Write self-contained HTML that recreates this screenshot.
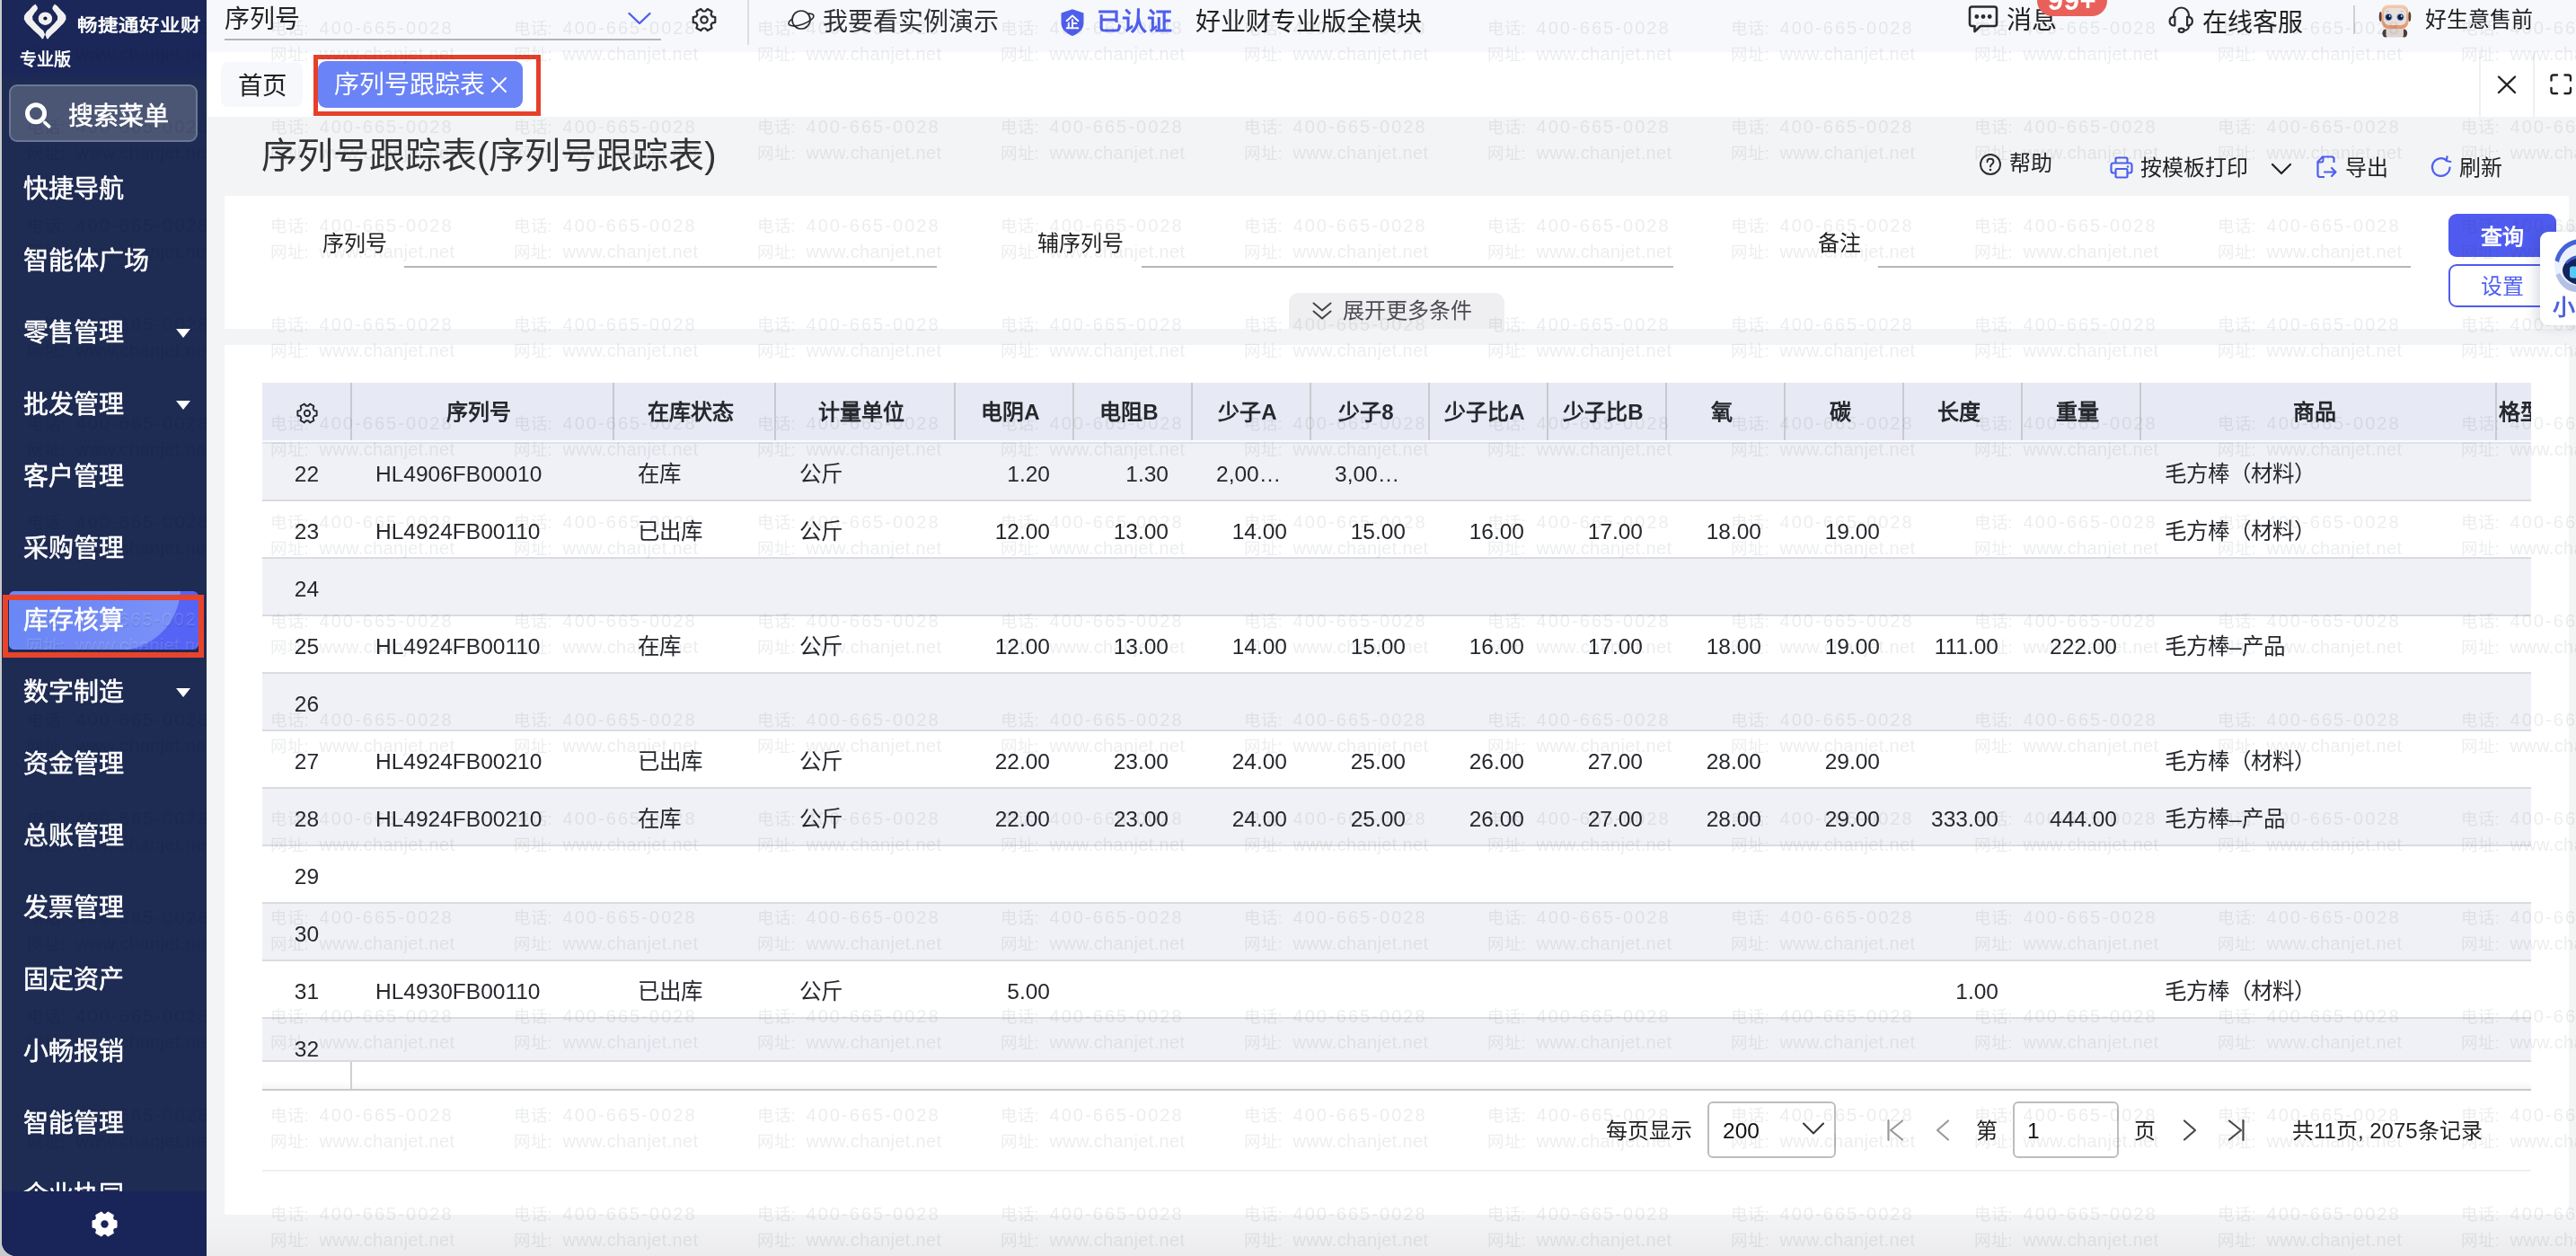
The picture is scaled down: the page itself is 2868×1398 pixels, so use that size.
<!DOCTYPE html>
<html lang="zh-CN"><head><meta charset="utf-8"><title>序列号跟踪表</title>
<style>
*{box-sizing:border-box;margin:0;padding:0}
html,body{width:2868px;height:1398px;overflow:hidden}
html{background:#f3f4f6}
#wrap{position:absolute;left:0;top:0;width:2868px;height:1398px;overflow:hidden;will-change:transform;transform:translateZ(0)}
body{position:relative;background:transparent;font-family:"Liberation Sans",sans-serif;color:#222;-webkit-font-smoothing:antialiased}
.abs,.mi,.tri,.wm,.tbl,.row,.c,.h,.vd,.thead,.tfoot,.hgear,svg.ic,.t{position:absolute}
.t{white-space:nowrap;line-height:1}
/* sidebar */
#strip{left:0;top:0;width:24px;height:1398px;background:#c8cacb}
#side{left:2px;top:0;width:228px;height:1398px;background:#1e2b53;border-bottom-left-radius:16px;overflow:hidden;z-index:55}
#side .wm{color:rgba(4,8,30,.075);z-index:0}
#sidetop{left:0;top:0;width:228px;height:90px;background:linear-gradient(180deg,#1b2758 0,#1b2758 92%,#1e2b53 100%)}
#sidebot{left:0;top:1326px;width:228px;height:72px;background:#192558}
.mi{left:23.8px;height:48px;line-height:48px;font-size:28px;color:#fff;font-weight:400;-webkit-text-stroke:.55px #fff;white-space:nowrap;letter-spacing:0}
.tri{left:194px;width:0;height:0;border-left:8px solid transparent;border-right:8px solid transparent;border-top:10px solid #fff}
#search{left:8px;top:94px;width:210px;height:64px;border-radius:9px;background:#4b5574;border:2px solid #6c7796}
#active{left:7.5px;top:658px;width:211px;height:64.5px;border-radius:6px;background:#5564f5;overflow:hidden}
#active:before{content:"";position:absolute;left:-20px;top:-74px;width:211px;height:140px;border-radius:0 70px 70px 0;background:linear-gradient(90deg,#6888f5 0%,#7088f6 45%,#7a92f8 100%)}
#active .wm{color:rgba(255,255,255,.13);left:19.5px;top:16.5px}
#redside{left:3px;top:661.5px;width:224px;height:70.5px;border:6px solid #e9432a;z-index:56}
/* top */
#topbar{left:230px;top:0;width:2638px;height:58px;background:#f7f8fc}
#tabbar{left:230px;top:58px;width:2638px;height:72px;background:#fff}
#panel1{left:250px;top:218px;width:2610px;height:148px;background:#fff}
#panel2{left:250px;top:384px;width:2610px;height:968px;background:#fff}
.ul{height:2px;background:#b5b5b8}
/* table */
.tbl{overflow:hidden;font-size:24px}
.thead{left:0;top:0;width:100%;height:64px;background:#e7e9f4;border-bottom:0}
.thead:after{content:"";position:absolute;left:0;top:64px;width:100%;height:4px;background:linear-gradient(180deg,#fbfbfd 0,#fbfbfd 60%,#e1e2e7 61%,#e1e2e7 100%)}
.h{top:0;height:64px;line-height:66px;text-align:center;font-weight:700;font-size:24px;color:#26282e;white-space:nowrap;overflow:hidden;padding-right:8px}
.vd{top:0;width:2px;height:64px;background:#c9cad0}
.row{left:0;width:100%;height:64px;border-bottom:2px solid #dadbe0;background:#fff}
.row.alt{background:#f0f1f7}
.c{top:0;height:62px;line-height:68px;white-space:nowrap;overflow:hidden;color:#26282e;font-size:24.5px}
.c.l{padding-left:27px;text-align:left}
.c.r{padding-right:26px;text-align:right}
.c.m{text-align:center}
.tfoot{left:0;width:100%;height:34px;background:#fff;border-top:2px solid #d9dade;border-bottom:2px solid #c9c9cd;box-shadow:inset 0 -8px 8px -6px rgba(0,0,0,.06)}
.tfoot:after{content:"";position:absolute;left:98px;top:0;width:2px;height:30px;background:#d0d0d4}
/* watermark */
.wm{font-size:20px;line-height:29px;color:rgba(35,45,50,.088);white-space:nowrap;z-index:50;pointer-events:none}
.wm i{font-style:normal;display:inline-block;width:55px;font-size:18.5px}
.wm b{font-weight:400;letter-spacing:2.05px}
.wm u{text-decoration:none;letter-spacing:.35px}
</style></head><body><div id="wrap">
<div class="abs" id="topbar"></div><div class="abs" id="tabbar"></div>
<div class="abs" id="panel1"></div><div class="abs" id="panel2"></div>
<!-- ===== top bar ===== -->
<div class="t" style="left:250px;top:7.5px;font-size:28px;color:#222">序列号</div>
<div class="abs ul" style="left:250px;top:43px;width:486px"></div>
<svg class="ic" style="left:698px;top:12px" width="28" height="17" viewBox="0 0 28 17"><path d="M2.5 3L14 14 25.5 3" fill="none" stroke="#4e5fee" stroke-width="2.4" stroke-linecap="round" stroke-linejoin="round"/></svg>
<svg class="ic" style="left:769px;top:7px;color:#2b2b2f" width="30" height="30" viewBox="-15 -15 30 30"><path d="M8.90 -3.60 L12.28 -2.83 L12.28 2.83 L8.90 3.60 L7.56 5.91 L8.59 9.22 L3.68 12.05 L1.34 9.51 L-1.34 9.51 L-3.68 12.05 L-8.59 9.22 L-7.56 5.91 L-8.90 3.60 L-12.28 2.83 L-12.28 -2.83 L-8.90 -3.60 L-7.56 -5.91 L-8.59 -9.22 L-3.68 -12.05 L-1.34 -9.51 L1.34 -9.51 L3.68 -12.05 L8.59 -9.22 L7.56 -5.91Z" fill="none" stroke="currentColor" stroke-width="2.2" stroke-linejoin="round"/><circle cx="0" cy="0" r="3.7" fill="none" stroke="currentColor" stroke-width="2.2"/></svg>
<div class="abs" style="left:832px;top:0;width:2px;height:50px;background:#dcdde2"></div>
<svg class="ic" style="left:874px;top:5px" width="36" height="34" viewBox="-18 -17 36 34"><circle cx="0" cy="0" r="10" fill="none" stroke="#2b2b2f" stroke-width="1.7"/><path d="M9.19 -4.04A14.6 5.2 0 1 1 -9.19 -4.04" transform="rotate(-19)" fill="none" stroke="#2b2b2f" stroke-width="1.6" stroke-linecap="round"/></svg>
<div class="t" style="left:916px;top:10.5px;font-size:28px;color:#303033">我要看实例演示</div>
<svg class="ic" style="left:1179px;top:9px" width="30" height="32" viewBox="0 0 30 32"><path d="M15 1.200L27.500 5.600V16.500C27.500 23.500 22 28.400 15 31 8 28.400 2.500 23.500 2.500 16.500V5.600Z" fill="#4e5fee"/><path d="M15 8.500L8.600 14.200M15 8.500L21.400 14.200M15 13V22M15 17H19.500M10.800 16.500V22M8.800 22.200H21.200" fill="none" stroke="#fff" stroke-width="2" stroke-linecap="round"/></svg>
<div class="t" style="left:1221px;top:10.5px;font-size:28px;font-weight:700;color:#4e5fee">已认证</div>
<div class="t" style="left:1331px;top:10.5px;font-size:28px;color:#222">好业财专业版全模块</div>
<!-- message -->
<svg class="ic" style="left:2190px;top:4px" width="36" height="35" viewBox="0 0 36 35"><path d="M5.500 3.500H30.500Q33 3.500 33 6V22.500Q33 25 30.500 25H15L8.500 31V25H5.500Q3 25 3 22.500V6Q3 3.500 5.500 3.500Z" fill="none" stroke="#2b2b2f" stroke-width="2.600" stroke-linejoin="round"/><circle cx="10.800" cy="14.500" r="2.400" fill="#2b2b2f"/><circle cx="18" cy="14.500" r="2.400" fill="#2b2b2f"/><circle cx="25.200" cy="14.500" r="2.400" fill="#2b2b2f"/></svg>
<div class="t" style="left:2234px;top:8.5px;font-size:28px;color:#222">消息</div>
<div class="abs" style="left:2268px;top:-19px;width:78px;height:37px;border-radius:17px;background:#e9605b;color:#fff;font-weight:700;font-size:31px;line-height:39.5px;text-align:center;letter-spacing:.6px;overflow:hidden">99+</div>
<!-- headset -->
<svg class="ic" style="left:2412px;top:5px" width="33" height="35" viewBox="0 0 33 35"><g fill="none" stroke="#2b2b2f" stroke-width="2.200" stroke-linejoin="round" stroke-linecap="round"><path d="M8 14V12A8.500 8.500 0 0 1 25 12V14"/><path d="M9.400 13.800H7.400A4.400 4.800 0 0 0 7.400 23.300H9.400Z"/><path d="M23.100 13.800H25.100A4.400 4.800 0 0 1 25.100 23.300H23.100Z"/><path d="M25.200 23.500C25.200 27 22.500 28.800 19.800 28.800"/><ellipse cx="16.700" cy="28.800" rx="3" ry="2.200"/></g></svg>
<div class="t" style="left:2452px;top:11.5px;font-size:28px;color:#222">在线客服</div>
<div class="abs" style="left:2620px;top:6px;width:2px;height:32px;background:#cfd0d6"></div>
<!-- avatar robot -->
<svg class="ic" style="left:2648px;top:4px" width="38" height="38" viewBox="0 0 38 38"><defs><linearGradient id="hg" x1="0" y1="0" x2="0" y2="1"><stop offset="0" stop-color="#f2cdb0"/><stop offset="1" stop-color="#e2956c"/></linearGradient></defs><ellipse cx="2.400" cy="14.500" rx="1.700" ry="5.600" fill="#5a4038"/><ellipse cx="34.600" cy="14.500" rx="1.700" ry="5.600" fill="#5a4038"/><ellipse cx="8" cy="33" rx="3.600" ry="4.600" fill="#4e3b36"/><ellipse cx="28.600" cy="33" rx="3.600" ry="4.600" fill="#4e3b36"/><rect x="8.500" y="26" width="19.500" height="11.500" rx="3" fill="#dbd4d2"/><rect x="3.500" y="1.600" width="30" height="26.400" rx="7.500" fill="url(#hg)"/><rect x="6" y="5" width="25" height="19" rx="6" fill="#e8e0dc"/><circle cx="11.400" cy="15.100" r="4.200" fill="#7d9fd4"/><circle cx="11.400" cy="15.100" r="3.100" fill="#0e1c3f"/><circle cx="12.600" cy="13.900" r=".9" fill="#fff"/><circle cx="24.500" cy="15.100" r="4.200" fill="#7d9fd4"/><circle cx="24.500" cy="15.100" r="3.100" fill="#0e1c3f"/><circle cx="25.700" cy="13.900" r=".9" fill="#fff"/><path d="M16.500 24.200H19.700L18.100 26Z" fill="#d88450"/><path d="M8.500 9.200Q9.800 7.800 11.200 8.300M27.500 9.200Q26.200 7.800 24.800 8.300" fill="none" stroke="#b9b0ac" stroke-width=".8" stroke-linecap="round"/></svg>
<div class="t" style="left:2700px;top:9.5px;font-size:24px;color:#222">好生意售前</div>

<!-- ===== tab bar ===== -->
<div class="abs" style="left:246px;top:69px;width:91px;height:50px;border-radius:8px;background:#f6f8fc"></div>
<div class="t" style="left:265px;top:81.5px;font-size:27.5px;color:#222">首页</div>
<div class="abs" style="left:354px;top:68px;width:228px;height:52px;border-radius:9px;background:#6a83f6"></div>
<div class="t" style="left:372px;top:81px;font-size:28px;color:#fff">序列号跟踪表</div>
<svg class="ic" style="left:546px;top:85px" width="19" height="19" viewBox="0 0 19 19"><path d="M2 2L17 17M17 2L2 17" stroke="#fff" stroke-width="2" stroke-linecap="round"/></svg>
<div class="abs" style="left:349px;top:61px;width:253px;height:68px;border:5px solid #e6402a"></div>
<div class="abs" style="left:2760px;top:58px;width:2px;height:72px;background:#f0f0f2"></div>
<div class="abs" style="left:2820px;top:58px;width:2px;height:72px;background:#f0f0f2"></div>
<svg class="ic" style="left:2779px;top:82px" width="24" height="24" viewBox="0 0 24 24"><path d="M3 3.500L21 21M21 3.500L3 21" stroke="#222" stroke-width="2.400" stroke-linecap="round"/></svg>
<svg class="ic" style="left:2838px;top:81px" width="30" height="26" viewBox="0 0 30 26"><path d="M2.500 8.500V5Q2.500 2.500 5 2.500H9M17.500 2.500H21.500Q24 2.500 24 5V8.500M24 17V20.500Q24 23 21.500 23H17.500M9 23H5Q2.500 23 2.500 20.500V17" fill="none" stroke="#222" stroke-width="2.400" stroke-linecap="round"/></svg>

<!-- ===== title row ===== -->
<div class="t" style="left:291px;top:153px;font-size:40px;color:#333">序列号跟踪表(序列号跟踪表)</div>
<svg class="ic" style="left:2203px;top:170px" width="26" height="26" viewBox="0 0 26 26"><circle cx="13" cy="13" r="11" fill="none" stroke="#2b2b2f" stroke-width="1.900"/><path d="M9.500 10.200C9.500 8 11 6.800 13 6.800S16.500 8 16.500 10C16.500 12.500 13 12.500 13 15.500" fill="none" stroke="#2b2b2f" stroke-width="1.900" stroke-linecap="round"/><circle cx="13" cy="19" r="1.300" fill="#2b2b2f"/></svg>
<div class="t" style="left:2237px;top:170px;font-size:24px;color:#222">帮助</div>
<svg class="ic" style="left:2349px;top:174px" width="26" height="25" viewBox="0 0 26 25"><path d="M6.500 7.500V3Q6.500 1.500 8 1.500H18Q19.500 1.500 19.500 3V7.500" fill="none" stroke="#4e5fee" stroke-width="2.200"/><path d="M6.500 18.500H4Q1.500 18.500 1.500 16V10Q1.500 7.500 4 7.500H22Q24.500 7.500 24.500 10V16Q24.500 18.500 22 18.500H19.500" fill="none" stroke="#4e5fee" stroke-width="2.200"/><rect x="6.500" y="14" width="13" height="9.500" rx="1" fill="none" stroke="#4e5fee" stroke-width="2.200"/><circle cx="20" cy="11.500" r="1.300" fill="#4e5fee"/></svg>
<div class="t" style="left:2383px;top:175px;font-size:24px;color:#222">按模板打印</div>
<svg class="ic" style="left:2528px;top:181px" width="24" height="14" viewBox="0 0 24 14"><path d="M2 2L12 12 22 2" fill="none" stroke="#222" stroke-width="2.200" stroke-linecap="round" stroke-linejoin="round"/></svg>
<svg class="ic" style="left:2579px;top:173px" width="24" height="26" viewBox="0 0 24 26"><path d="M19.500 8V4Q19.500 1.500 17 1.500H7L1.500 7V21.500Q1.500 24 4 24H9" fill="none" stroke="#4e5fee" stroke-width="2.200" stroke-linejoin="round"/><path d="M7.500 1.800V5.500Q7.500 7.500 5.500 7.500H1.800" fill="none" stroke="#4e5fee" stroke-width="2"/><path d="M9 18.500H21.500M17 14L21.500 18.500 17 23" fill="none" stroke="#4e5fee" stroke-width="2.200" stroke-linecap="round" stroke-linejoin="round"/></svg>
<div class="t" style="left:2611px;top:175px;font-size:24px;color:#222">导出</div>
<svg class="ic" style="left:2705px;top:173px" width="26" height="26" viewBox="0 0 26 26"><path d="M22.500 13.500A9.800 9.800 0 1 1 18.300 5" fill="none" stroke="#4e5fee" stroke-width="2.200" stroke-linecap="round"/><path d="M18.600 1.200V6H23.400" fill="none" stroke="#4e5fee" stroke-width="2.200" stroke-linecap="round" stroke-linejoin="round" transform="rotate(12 18.600 6)"/></svg>
<div class="t" style="left:2738px;top:175px;font-size:24px;color:#222">刷新</div>

<!-- ===== filter panel ===== -->
<div class="t" style="left:359px;top:258.5px;font-size:24px;color:#222">序列号</div>
<div class="abs ul" style="left:450px;top:296px;width:593px"></div>
<div class="t" style="left:1155px;top:258.5px;font-size:24px;color:#222">辅序列号</div>
<div class="abs ul" style="left:1271px;top:296px;width:592px"></div>
<div class="t" style="left:2024px;top:258.5px;font-size:24px;color:#222">备注</div>
<div class="abs ul" style="left:2091px;top:296px;width:593px"></div>
<div class="abs" style="left:2726px;top:238px;width:120px;height:48px;border-radius:9px;background:#4f5bef"></div>
<div class="t" style="left:2762px;top:251.5px;font-size:24px;font-weight:700;color:#fff">查询</div>
<div class="abs" style="left:2726px;top:294px;width:120px;height:48px;border-radius:9px;border:2px solid #4f5bef;background:#fff"></div>
<div class="t" style="left:2762px;top:307px;font-size:24px;font-weight:500;color:#4e5fee">设置</div>
<div class="abs" style="left:1435px;top:326px;width:240px;height:40px;border-radius:11px 11px 0 0;background:#efeff2"></div>
<svg class="ic" style="left:1460px;top:335px" width="24" height="22" viewBox="0 0 24 22"><path d="M2.500 2.500L12 10.500 21.500 2.500M2.500 11.500L12 19.500 21.500 11.500" fill="none" stroke="#444" stroke-width="2" stroke-linecap="round" stroke-linejoin="round"/></svg>
<div class="t" style="left:1495px;top:334px;font-size:24px;color:#4c4c50">展开更多条件</div>

<!-- ===== pagination ===== -->
<div class="t" style="left:1788px;top:1246.5px;font-size:24px;color:#222">每页显示</div>
<div class="abs" style="left:1901px;top:1226px;width:143px;height:63px;border-radius:6px;border:2px solid #bdbdc0;background:#fff"></div>
<div class="t" style="left:1918px;top:1246.5px;font-size:24.500px;color:#111">200</div>
<svg class="ic" style="left:2006px;top:1248px" width="26" height="16" viewBox="0 0 26 16"><path d="M2 2.500L13 13.500 24 2.500" fill="none" stroke="#333" stroke-width="2" stroke-linecap="round" stroke-linejoin="round"/></svg>
<svg class="ic" style="left:2100px;top:1245px" width="20" height="26" viewBox="0 0 20 26"><path d="M2.500 2V24M18 2.500L5 13 18 23.500" fill="none" stroke="#9a9a9e" stroke-width="2.200" stroke-linecap="round" stroke-linejoin="round"/></svg>
<svg class="ic" style="left:2154px;top:1245px" width="18" height="26" viewBox="0 0 18 26"><path d="M15 2.500L3 13 15 23.500" fill="none" stroke="#9a9a9e" stroke-width="2.200" stroke-linecap="round" stroke-linejoin="round"/></svg>
<div class="t" style="left:2200px;top:1246.5px;font-size:24px;color:#222">第</div>
<div class="abs" style="left:2241px;top:1226px;width:118px;height:63px;border-radius:6px;border:2px solid #bdbdc0;background:#fff"></div>
<div class="t" style="left:2257px;top:1246.5px;font-size:24.500px;color:#111">1</div>
<div class="t" style="left:2376px;top:1246.5px;font-size:24px;color:#222">页</div>
<svg class="ic" style="left:2429px;top:1245px" width="18" height="26" viewBox="0 0 18 26"><path d="M3 2.500L15 13 3 23.500" fill="none" stroke="#48484c" stroke-width="2.200" stroke-linecap="round" stroke-linejoin="round"/></svg>
<svg class="ic" style="left:2480px;top:1245px" width="20" height="26" viewBox="0 0 20 26"><path d="M17.500 2V24M2 2.500L15 13 2 23.500" fill="none" stroke="#48484c" stroke-width="2.200" stroke-linecap="round" stroke-linejoin="round"/></svg>
<div class="t" style="left:2552px;top:1246.5px;font-size:24px;color:#222">共11页, 2075条记录</div>
<div class="abs" style="left:292px;top:1302px;width:2526px;height:2px;background:#f0f0f2"></div>
<div class="abs" style="left:230px;top:1352px;width:2638px;height:46px;background:linear-gradient(180deg,#f3f4f6 0%,#ececee 100%)"></div>

<!-- ===== floating assistant ===== -->
<div class="abs" style="left:2828px;top:258px;width:60px;height:104px;border-radius:9px;background:#fff;box-shadow:-5px 2px 14px rgba(40,50,90,.16);z-index:60"></div>
<svg class="ic" style="left:2828px;top:258px;z-index:61" width="40" height="104" viewBox="0 0 40 104"><circle cx="46" cy="38" r="30" fill="#eaf0fc"/><path d="M16.500 32A30 30 0 0 1 40 8.600V14A25 25 0 0 0 21 34Z" fill="#4463d6"/><path d="M17.500 48Q24 66 40 67V60Q28 58 22 46Z" fill="#b4c1e6"/><ellipse cx="50" cy="43" rx="25" ry="17" fill="#14235c"/><path d="M28 34Q34 27 40 26.500V30Q34 31 30 36Z" fill="#3a58c8"/><rect x="33" y="38.500" width="10" height="13" rx="3" fill="#57c9f6"/></svg>
<div class="t" style="left:2842px;top:330px;font-size:25px;font-weight:700;color:#4a62dc;z-index:61">小畅</div>

<div class="tbl" style="left:292px;top:426px;width:2526px;height:788px">
<div class="row alt" style="top:68px">
<span class="c m" style="left:0px;width:99px">22</span>
<span class="c l" style="left:99px;width:292px">HL4906FB00010</span>
<span class="c l" style="left:391px;width:180px">在库</span>
<span class="c l" style="left:571px;width:200px">公斤</span>
<span class="c r" style="left:771px;width:132px">1.20</span>
<span class="c r" style="left:903px;width:132px">1.30</span>
<span class="c l" style="left:1035px;width:132px">2,00…</span>
<span class="c l" style="left:1167px;width:132px">3,00…</span>
<span class="c l" style="left:2091px;width:396px">毛方棒（材料）</span>
</div>
<div class="row" style="top:132px">
<span class="c m" style="left:0px;width:99px">23</span>
<span class="c l" style="left:99px;width:292px">HL4924FB00110</span>
<span class="c l" style="left:391px;width:180px">已出库</span>
<span class="c l" style="left:571px;width:200px">公斤</span>
<span class="c r" style="left:771px;width:132px">12.00</span>
<span class="c r" style="left:903px;width:132px">13.00</span>
<span class="c r" style="left:1035px;width:132px">14.00</span>
<span class="c r" style="left:1167px;width:132px">15.00</span>
<span class="c r" style="left:1299px;width:132px">16.00</span>
<span class="c r" style="left:1431px;width:132px">17.00</span>
<span class="c r" style="left:1563px;width:132px">18.00</span>
<span class="c r" style="left:1695px;width:132px">19.00</span>
<span class="c l" style="left:2091px;width:396px">毛方棒（材料）</span>
</div>
<div class="row alt" style="top:196px">
<span class="c m" style="left:0px;width:99px">24</span>
</div>
<div class="row" style="top:260px">
<span class="c m" style="left:0px;width:99px">25</span>
<span class="c l" style="left:99px;width:292px">HL4924FB00110</span>
<span class="c l" style="left:391px;width:180px">在库</span>
<span class="c l" style="left:571px;width:200px">公斤</span>
<span class="c r" style="left:771px;width:132px">12.00</span>
<span class="c r" style="left:903px;width:132px">13.00</span>
<span class="c r" style="left:1035px;width:132px">14.00</span>
<span class="c r" style="left:1167px;width:132px">15.00</span>
<span class="c r" style="left:1299px;width:132px">16.00</span>
<span class="c r" style="left:1431px;width:132px">17.00</span>
<span class="c r" style="left:1563px;width:132px">18.00</span>
<span class="c r" style="left:1695px;width:132px">19.00</span>
<span class="c r" style="left:1827px;width:132px">111.00</span>
<span class="c r" style="left:1959px;width:132px">222.00</span>
<span class="c l" style="left:2091px;width:396px">毛方棒–产品</span>
</div>
<div class="row alt" style="top:324px">
<span class="c m" style="left:0px;width:99px">26</span>
</div>
<div class="row" style="top:388px">
<span class="c m" style="left:0px;width:99px">27</span>
<span class="c l" style="left:99px;width:292px">HL4924FB00210</span>
<span class="c l" style="left:391px;width:180px">已出库</span>
<span class="c l" style="left:571px;width:200px">公斤</span>
<span class="c r" style="left:771px;width:132px">22.00</span>
<span class="c r" style="left:903px;width:132px">23.00</span>
<span class="c r" style="left:1035px;width:132px">24.00</span>
<span class="c r" style="left:1167px;width:132px">25.00</span>
<span class="c r" style="left:1299px;width:132px">26.00</span>
<span class="c r" style="left:1431px;width:132px">27.00</span>
<span class="c r" style="left:1563px;width:132px">28.00</span>
<span class="c r" style="left:1695px;width:132px">29.00</span>
<span class="c l" style="left:2091px;width:396px">毛方棒（材料）</span>
</div>
<div class="row alt" style="top:452px">
<span class="c m" style="left:0px;width:99px">28</span>
<span class="c l" style="left:99px;width:292px">HL4924FB00210</span>
<span class="c l" style="left:391px;width:180px">在库</span>
<span class="c l" style="left:571px;width:200px">公斤</span>
<span class="c r" style="left:771px;width:132px">22.00</span>
<span class="c r" style="left:903px;width:132px">23.00</span>
<span class="c r" style="left:1035px;width:132px">24.00</span>
<span class="c r" style="left:1167px;width:132px">25.00</span>
<span class="c r" style="left:1299px;width:132px">26.00</span>
<span class="c r" style="left:1431px;width:132px">27.00</span>
<span class="c r" style="left:1563px;width:132px">28.00</span>
<span class="c r" style="left:1695px;width:132px">29.00</span>
<span class="c r" style="left:1827px;width:132px">333.00</span>
<span class="c r" style="left:1959px;width:132px">444.00</span>
<span class="c l" style="left:2091px;width:396px">毛方棒–产品</span>
</div>
<div class="row" style="top:516px">
<span class="c m" style="left:0px;width:99px">29</span>
</div>
<div class="row alt" style="top:580px">
<span class="c m" style="left:0px;width:99px">30</span>
</div>
<div class="row" style="top:644px">
<span class="c m" style="left:0px;width:99px">31</span>
<span class="c l" style="left:99px;width:292px">HL4930FB00110</span>
<span class="c l" style="left:391px;width:180px">已出库</span>
<span class="c l" style="left:571px;width:200px">公斤</span>
<span class="c r" style="left:771px;width:132px">5.00</span>
<span class="c r" style="left:1827px;width:132px">1.00</span>
<span class="c l" style="left:2091px;width:396px">毛方棒（材料）</span>
</div>
<div class="row alt" style="top:708px">
<span class="c m" style="left:0px;width:99px">32</span>
</div>
<div class="tfoot" style="top:754px"></div>
<div class="thead">
<span class="h" style="left:0px;width:99px"></span>
<span class="h" style="left:99px;width:292px">序列号</span>
<i class="vd" style="left:98px"></i>
<span class="h" style="left:391px;width:180px">在库状态</span>
<i class="vd" style="left:390px"></i>
<span class="h" style="left:571px;width:200px">计量单位</span>
<i class="vd" style="left:570px"></i>
<span class="h" style="left:771px;width:132px">电阴A</span>
<i class="vd" style="left:770px"></i>
<span class="h" style="left:903px;width:132px">电阻B</span>
<i class="vd" style="left:902px"></i>
<span class="h" style="left:1035px;width:132px">少子A</span>
<i class="vd" style="left:1034px"></i>
<span class="h" style="left:1167px;width:132px">少子8</span>
<i class="vd" style="left:1166px"></i>
<span class="h" style="left:1299px;width:132px">少子比A</span>
<i class="vd" style="left:1298px"></i>
<span class="h" style="left:1431px;width:132px">少子比B</span>
<i class="vd" style="left:1430px"></i>
<span class="h" style="left:1563px;width:132px">氧</span>
<i class="vd" style="left:1562px"></i>
<span class="h" style="left:1695px;width:132px">碳</span>
<i class="vd" style="left:1694px"></i>
<span class="h" style="left:1827px;width:132px">长度</span>
<i class="vd" style="left:1826px"></i>
<span class="h" style="left:1959px;width:132px">重量</span>
<i class="vd" style="left:1958px"></i>
<span class="h" style="left:2091px;width:396px">商品</span>
<i class="vd" style="left:2090px"></i>
<span class="h" style="left:2490px;width:121px;text-align:left;padding:0">格型</span>
<i class="vd" style="left:2486px"></i>
<svg class="hgear" viewBox="-15 -15 30 30" style="left:37px;top:21px;width:26px;height:26px;color:#26282e"><path d="M8.90 -3.60 L12.28 -2.83 L12.28 2.83 L8.90 3.60 L7.56 5.91 L8.59 9.22 L3.68 12.05 L1.34 9.51 L-1.34 9.51 L-3.68 12.05 L-8.59 9.22 L-7.56 5.91 L-8.90 3.60 L-12.28 2.83 L-12.28 -2.83 L-8.90 -3.60 L-7.56 -5.91 L-8.59 -9.22 L-3.68 -12.05 L-1.34 -9.51 L1.34 -9.51 L3.68 -12.05 L8.59 -9.22 L7.56 -5.91Z" fill="none" stroke="currentColor" stroke-width="2.2" stroke-linejoin="round"/><circle cx="0" cy="0" r="3.7" fill="none" stroke="currentColor" stroke-width="2.2"/></svg>
</div>
</div>
<div class="abs" id="strip"></div><div class="abs" id="side">
<div class="abs" id="sidetop"></div>
<div class="abs" id="search"></div><div class="abs" id="active"><div class="wm"><i>电话:</i><b>400-665-0028</b><br><i>网址:</i><u>www.chanjet.net</u></div></div>
<div class="mi" style="top:187.0px">快捷导航</div>
<div class="mi" style="top:267.0px">智能体广场</div>
<div class="mi" style="top:347.0px">零售管理</div>
<i class="tri" style="top:366.0px"></i>
<div class="mi" style="top:427.0px">批发管理</div>
<i class="tri" style="top:446.0px"></i>
<div class="mi" style="top:507.0px">客户管理</div>
<div class="mi" style="top:587.0px">采购管理</div>
<div class="mi" style="top:667.0px">库存核算</div>
<div class="mi" style="top:747.0px">数字制造</div>
<i class="tri" style="top:766.0px"></i>
<div class="mi" style="top:827.0px">资金管理</div>
<div class="mi" style="top:907.0px">总账管理</div>
<div class="mi" style="top:987.0px">发票管理</div>
<div class="mi" style="top:1067.0px">固定资产</div>
<div class="mi" style="top:1147.0px">小畅报销</div>
<div class="mi" style="top:1227.0px">智能管理</div>
<div class="mi" style="top:1307.0px">企业协同</div>
<div class="wm" style="left:27.5px;top:17px"><i>电话:</i><b>400-665-0028</b><br><i>网址:</i><u>www.chanjet.net</u></div>
<div class="wm" style="left:27.5px;top:127px"><i>电话:</i><b>400-665-0028</b><br><i>网址:</i><u>www.chanjet.net</u></div>
<div class="wm" style="left:27.5px;top:237px"><i>电话:</i><b>400-665-0028</b><br><i>网址:</i><u>www.chanjet.net</u></div>
<div class="wm" style="left:27.5px;top:347px"><i>电话:</i><b>400-665-0028</b><br><i>网址:</i><u>www.chanjet.net</u></div>
<div class="wm" style="left:27.5px;top:457px"><i>电话:</i><b>400-665-0028</b><br><i>网址:</i><u>www.chanjet.net</u></div>
<div class="wm" style="left:27.5px;top:567px"><i>电话:</i><b>400-665-0028</b><br><i>网址:</i><u>www.chanjet.net</u></div>
<div class="wm" style="left:27.5px;top:677px"><i>电话:</i><b>400-665-0028</b><br><i>网址:</i><u>www.chanjet.net</u></div>
<div class="wm" style="left:27.5px;top:787px"><i>电话:</i><b>400-665-0028</b><br><i>网址:</i><u>www.chanjet.net</u></div>
<div class="wm" style="left:27.5px;top:897px"><i>电话:</i><b>400-665-0028</b><br><i>网址:</i><u>www.chanjet.net</u></div>
<div class="wm" style="left:27.5px;top:1007px"><i>电话:</i><b>400-665-0028</b><br><i>网址:</i><u>www.chanjet.net</u></div>
<div class="wm" style="left:27.5px;top:1117px"><i>电话:</i><b>400-665-0028</b><br><i>网址:</i><u>www.chanjet.net</u></div>
<div class="wm" style="left:27.5px;top:1227px"><i>电话:</i><b>400-665-0028</b><br><i>网址:</i><u>www.chanjet.net</u></div>
<div class="wm" style="left:27.5px;top:1337px"><i>电话:</i><b>400-665-0028</b><br><i>网址:</i><u>www.chanjet.net</u></div>
<div class="abs" id="sidebot"></div>
<!-- logo (coords relative to #side, which starts at x=2) -->
<svg class="ic" style="left:0;top:0" width="90" height="50" viewBox="2 0 90 50"><path d="M38.5 5.2C36.1 6.7 36.6 6.8 33.1 10.4C29.6 14.0 30.0 12.9 28.0 15.9C26.0 18.9 27.0 16.8 27.0 19.3C27.0 21.8 25.7 19.8 28.0 23.5C30.3 27.2 28.6 24.9 33.9 30.3C39.2 35.7 39.6 35.5 43.9 39.8C48.2 44.1 45.0 42.8 46.7 43.2C48.4 43.6 48.1 43.4 48.9 41.0C49.7 38.6 50.8 39.5 49.1 35.9C47.4 32.3 47.5 34.2 43.9 30.3C40.3 26.4 40.8 27.8 38.3 24.3C35.8 20.8 36.6 22.7 36.3 19.9C36.0 17.1 35.8 18.9 37.5 15.9C39.2 12.9 39.9 13.4 41.3 10.8C42.7 8.2 41.9 9.6 41.6 8.0C41.3 6.4 41.3 6.9 40.3 6.0C39.3 5.1 40.9 3.7 38.5 5.2Z" fill="#f1f0f1"/><path d="M60.0 6.0C59.0 6.9 59.1 6.4 58.7 8.0C58.4 9.6 57.7 8.2 59.0 10.8C60.4 13.4 61.2 12.9 62.8 15.9C64.5 18.9 64.3 17.1 64.0 19.9C63.8 22.7 64.6 20.8 62.0 24.3C59.5 27.8 60.0 26.4 56.4 30.3C52.8 34.2 52.9 32.3 51.2 35.9C49.6 39.5 50.6 38.6 51.4 41.0C52.2 43.4 52.0 43.6 53.6 43.2C55.3 42.8 52.2 44.1 56.4 39.8C60.7 35.5 61.1 35.7 66.4 30.3C71.7 24.9 70.0 27.2 72.3 23.5C74.6 19.8 73.3 21.8 73.3 19.3C73.3 16.8 74.4 18.9 72.3 15.9C70.3 12.9 70.7 14.0 67.2 10.4C63.7 6.8 64.2 6.7 61.8 5.2C59.4 3.7 61.1 5.1 60.0 6.0Z" fill="#f1f0f1"/><ellipse cx="50.4" cy="20.7" rx="7.7" ry="7.2" fill="#f1f0f1"/><circle cx="50.4" cy="20.5" r="2.1" fill="#15163a"/></svg>
<div class="t" style="left:84px;top:18.5px;font-size:19.6px;font-weight:700;color:#fff;transform:scaleX(1.145);transform-origin:0 50%">畅捷通好业财</div>
<div class="t" style="left:20px;top:57px;font-size:19px;font-weight:700;color:#fff">专业版</div>
<!-- search -->
<svg class="ic" style="left:24px;top:112px" width="36" height="36" viewBox="0 0 36 36"><circle cx="14" cy="14.300" r="9.500" fill="none" stroke="#fff" stroke-width="5"/><path d="M23.800 24.300L28.700 28.800" stroke="#fff" stroke-width="3.600" stroke-linecap="round"/></svg>
<div class="t" style="left:74px;top:115.500px;font-size:28px;font-weight:400;-webkit-text-stroke:.55px #fff;color:#fff">搜索菜单</div>
<!-- bottom gear -->
<svg class="ic" style="left:98.500px;top:1346.700px" width="31" height="31" viewBox="-15.500 -15.500 31 31"><path d="M9.76 -4.14 L13.00 -3.24 L13.00 3.24 L9.76 4.14 L8.47 6.38 L9.31 9.64 L3.69 12.88 L1.29 10.52 L-1.29 10.52 L-3.69 12.88 L-9.31 9.64 L-8.47 6.38 L-9.76 4.14 L-13.00 3.24 L-13.00 -3.24 L-9.76 -4.14 L-8.47 -6.38 L-9.31 -9.64 L-3.69 -12.88 L-1.29 -10.52 L1.29 -10.52 L3.69 -12.88 L9.31 -9.64 L8.47 -6.38Z" fill="#fff" stroke="#fff" stroke-width="2" stroke-linejoin="round"/><circle cx="0" cy="0" r="4.2" fill="#192558"/></svg>

</div>
<div class="abs" id="redside"></div>
<div class="wm" style="left:300.5px;top:17px"><i>电话:</i><b>400-665-0028</b><br><i>网址:</i><u>www.chanjet.net</u></div>
<div class="wm" style="left:571.5px;top:17px"><i>电话:</i><b>400-665-0028</b><br><i>网址:</i><u>www.chanjet.net</u></div>
<div class="wm" style="left:842.5px;top:17px"><i>电话:</i><b>400-665-0028</b><br><i>网址:</i><u>www.chanjet.net</u></div>
<div class="wm" style="left:1113.5px;top:17px"><i>电话:</i><b>400-665-0028</b><br><i>网址:</i><u>www.chanjet.net</u></div>
<div class="wm" style="left:1384.5px;top:17px"><i>电话:</i><b>400-665-0028</b><br><i>网址:</i><u>www.chanjet.net</u></div>
<div class="wm" style="left:1655.5px;top:17px"><i>电话:</i><b>400-665-0028</b><br><i>网址:</i><u>www.chanjet.net</u></div>
<div class="wm" style="left:1926.5px;top:17px"><i>电话:</i><b>400-665-0028</b><br><i>网址:</i><u>www.chanjet.net</u></div>
<div class="wm" style="left:2197.5px;top:17px"><i>电话:</i><b>400-665-0028</b><br><i>网址:</i><u>www.chanjet.net</u></div>
<div class="wm" style="left:2468.5px;top:17px"><i>电话:</i><b>400-665-0028</b><br><i>网址:</i><u>www.chanjet.net</u></div>
<div class="wm" style="left:2739.5px;top:17px"><i>电话:</i><b>400-665-0028</b><br><i>网址:</i><u>www.chanjet.net</u></div>
<div class="wm" style="left:3010.5px;top:17px"><i>电话:</i><b>400-665-0028</b><br><i>网址:</i><u>www.chanjet.net</u></div>
<div class="wm" style="left:300.5px;top:127px"><i>电话:</i><b>400-665-0028</b><br><i>网址:</i><u>www.chanjet.net</u></div>
<div class="wm" style="left:571.5px;top:127px"><i>电话:</i><b>400-665-0028</b><br><i>网址:</i><u>www.chanjet.net</u></div>
<div class="wm" style="left:842.5px;top:127px"><i>电话:</i><b>400-665-0028</b><br><i>网址:</i><u>www.chanjet.net</u></div>
<div class="wm" style="left:1113.5px;top:127px"><i>电话:</i><b>400-665-0028</b><br><i>网址:</i><u>www.chanjet.net</u></div>
<div class="wm" style="left:1384.5px;top:127px"><i>电话:</i><b>400-665-0028</b><br><i>网址:</i><u>www.chanjet.net</u></div>
<div class="wm" style="left:1655.5px;top:127px"><i>电话:</i><b>400-665-0028</b><br><i>网址:</i><u>www.chanjet.net</u></div>
<div class="wm" style="left:1926.5px;top:127px"><i>电话:</i><b>400-665-0028</b><br><i>网址:</i><u>www.chanjet.net</u></div>
<div class="wm" style="left:2197.5px;top:127px"><i>电话:</i><b>400-665-0028</b><br><i>网址:</i><u>www.chanjet.net</u></div>
<div class="wm" style="left:2468.5px;top:127px"><i>电话:</i><b>400-665-0028</b><br><i>网址:</i><u>www.chanjet.net</u></div>
<div class="wm" style="left:2739.5px;top:127px"><i>电话:</i><b>400-665-0028</b><br><i>网址:</i><u>www.chanjet.net</u></div>
<div class="wm" style="left:3010.5px;top:127px"><i>电话:</i><b>400-665-0028</b><br><i>网址:</i><u>www.chanjet.net</u></div>
<div class="wm" style="left:300.5px;top:237px"><i>电话:</i><b>400-665-0028</b><br><i>网址:</i><u>www.chanjet.net</u></div>
<div class="wm" style="left:571.5px;top:237px"><i>电话:</i><b>400-665-0028</b><br><i>网址:</i><u>www.chanjet.net</u></div>
<div class="wm" style="left:842.5px;top:237px"><i>电话:</i><b>400-665-0028</b><br><i>网址:</i><u>www.chanjet.net</u></div>
<div class="wm" style="left:1113.5px;top:237px"><i>电话:</i><b>400-665-0028</b><br><i>网址:</i><u>www.chanjet.net</u></div>
<div class="wm" style="left:1384.5px;top:237px"><i>电话:</i><b>400-665-0028</b><br><i>网址:</i><u>www.chanjet.net</u></div>
<div class="wm" style="left:1655.5px;top:237px"><i>电话:</i><b>400-665-0028</b><br><i>网址:</i><u>www.chanjet.net</u></div>
<div class="wm" style="left:1926.5px;top:237px"><i>电话:</i><b>400-665-0028</b><br><i>网址:</i><u>www.chanjet.net</u></div>
<div class="wm" style="left:2197.5px;top:237px"><i>电话:</i><b>400-665-0028</b><br><i>网址:</i><u>www.chanjet.net</u></div>
<div class="wm" style="left:2468.5px;top:237px"><i>电话:</i><b>400-665-0028</b><br><i>网址:</i><u>www.chanjet.net</u></div>
<div class="wm" style="left:2739.5px;top:237px"><i>电话:</i><b>400-665-0028</b><br><i>网址:</i><u>www.chanjet.net</u></div>
<div class="wm" style="left:3010.5px;top:237px"><i>电话:</i><b>400-665-0028</b><br><i>网址:</i><u>www.chanjet.net</u></div>
<div class="wm" style="left:300.5px;top:347px"><i>电话:</i><b>400-665-0028</b><br><i>网址:</i><u>www.chanjet.net</u></div>
<div class="wm" style="left:571.5px;top:347px"><i>电话:</i><b>400-665-0028</b><br><i>网址:</i><u>www.chanjet.net</u></div>
<div class="wm" style="left:842.5px;top:347px"><i>电话:</i><b>400-665-0028</b><br><i>网址:</i><u>www.chanjet.net</u></div>
<div class="wm" style="left:1113.5px;top:347px"><i>电话:</i><b>400-665-0028</b><br><i>网址:</i><u>www.chanjet.net</u></div>
<div class="wm" style="left:1384.5px;top:347px"><i>电话:</i><b>400-665-0028</b><br><i>网址:</i><u>www.chanjet.net</u></div>
<div class="wm" style="left:1655.5px;top:347px"><i>电话:</i><b>400-665-0028</b><br><i>网址:</i><u>www.chanjet.net</u></div>
<div class="wm" style="left:1926.5px;top:347px"><i>电话:</i><b>400-665-0028</b><br><i>网址:</i><u>www.chanjet.net</u></div>
<div class="wm" style="left:2197.5px;top:347px"><i>电话:</i><b>400-665-0028</b><br><i>网址:</i><u>www.chanjet.net</u></div>
<div class="wm" style="left:2468.5px;top:347px"><i>电话:</i><b>400-665-0028</b><br><i>网址:</i><u>www.chanjet.net</u></div>
<div class="wm" style="left:2739.5px;top:347px"><i>电话:</i><b>400-665-0028</b><br><i>网址:</i><u>www.chanjet.net</u></div>
<div class="wm" style="left:3010.5px;top:347px"><i>电话:</i><b>400-665-0028</b><br><i>网址:</i><u>www.chanjet.net</u></div>
<div class="wm" style="left:300.5px;top:457px"><i>电话:</i><b>400-665-0028</b><br><i>网址:</i><u>www.chanjet.net</u></div>
<div class="wm" style="left:571.5px;top:457px"><i>电话:</i><b>400-665-0028</b><br><i>网址:</i><u>www.chanjet.net</u></div>
<div class="wm" style="left:842.5px;top:457px"><i>电话:</i><b>400-665-0028</b><br><i>网址:</i><u>www.chanjet.net</u></div>
<div class="wm" style="left:1113.5px;top:457px"><i>电话:</i><b>400-665-0028</b><br><i>网址:</i><u>www.chanjet.net</u></div>
<div class="wm" style="left:1384.5px;top:457px"><i>电话:</i><b>400-665-0028</b><br><i>网址:</i><u>www.chanjet.net</u></div>
<div class="wm" style="left:1655.5px;top:457px"><i>电话:</i><b>400-665-0028</b><br><i>网址:</i><u>www.chanjet.net</u></div>
<div class="wm" style="left:1926.5px;top:457px"><i>电话:</i><b>400-665-0028</b><br><i>网址:</i><u>www.chanjet.net</u></div>
<div class="wm" style="left:2197.5px;top:457px"><i>电话:</i><b>400-665-0028</b><br><i>网址:</i><u>www.chanjet.net</u></div>
<div class="wm" style="left:2468.5px;top:457px"><i>电话:</i><b>400-665-0028</b><br><i>网址:</i><u>www.chanjet.net</u></div>
<div class="wm" style="left:2739.5px;top:457px"><i>电话:</i><b>400-665-0028</b><br><i>网址:</i><u>www.chanjet.net</u></div>
<div class="wm" style="left:3010.5px;top:457px"><i>电话:</i><b>400-665-0028</b><br><i>网址:</i><u>www.chanjet.net</u></div>
<div class="wm" style="left:300.5px;top:567px"><i>电话:</i><b>400-665-0028</b><br><i>网址:</i><u>www.chanjet.net</u></div>
<div class="wm" style="left:571.5px;top:567px"><i>电话:</i><b>400-665-0028</b><br><i>网址:</i><u>www.chanjet.net</u></div>
<div class="wm" style="left:842.5px;top:567px"><i>电话:</i><b>400-665-0028</b><br><i>网址:</i><u>www.chanjet.net</u></div>
<div class="wm" style="left:1113.5px;top:567px"><i>电话:</i><b>400-665-0028</b><br><i>网址:</i><u>www.chanjet.net</u></div>
<div class="wm" style="left:1384.5px;top:567px"><i>电话:</i><b>400-665-0028</b><br><i>网址:</i><u>www.chanjet.net</u></div>
<div class="wm" style="left:1655.5px;top:567px"><i>电话:</i><b>400-665-0028</b><br><i>网址:</i><u>www.chanjet.net</u></div>
<div class="wm" style="left:1926.5px;top:567px"><i>电话:</i><b>400-665-0028</b><br><i>网址:</i><u>www.chanjet.net</u></div>
<div class="wm" style="left:2197.5px;top:567px"><i>电话:</i><b>400-665-0028</b><br><i>网址:</i><u>www.chanjet.net</u></div>
<div class="wm" style="left:2468.5px;top:567px"><i>电话:</i><b>400-665-0028</b><br><i>网址:</i><u>www.chanjet.net</u></div>
<div class="wm" style="left:2739.5px;top:567px"><i>电话:</i><b>400-665-0028</b><br><i>网址:</i><u>www.chanjet.net</u></div>
<div class="wm" style="left:3010.5px;top:567px"><i>电话:</i><b>400-665-0028</b><br><i>网址:</i><u>www.chanjet.net</u></div>
<div class="wm" style="left:300.5px;top:677px"><i>电话:</i><b>400-665-0028</b><br><i>网址:</i><u>www.chanjet.net</u></div>
<div class="wm" style="left:571.5px;top:677px"><i>电话:</i><b>400-665-0028</b><br><i>网址:</i><u>www.chanjet.net</u></div>
<div class="wm" style="left:842.5px;top:677px"><i>电话:</i><b>400-665-0028</b><br><i>网址:</i><u>www.chanjet.net</u></div>
<div class="wm" style="left:1113.5px;top:677px"><i>电话:</i><b>400-665-0028</b><br><i>网址:</i><u>www.chanjet.net</u></div>
<div class="wm" style="left:1384.5px;top:677px"><i>电话:</i><b>400-665-0028</b><br><i>网址:</i><u>www.chanjet.net</u></div>
<div class="wm" style="left:1655.5px;top:677px"><i>电话:</i><b>400-665-0028</b><br><i>网址:</i><u>www.chanjet.net</u></div>
<div class="wm" style="left:1926.5px;top:677px"><i>电话:</i><b>400-665-0028</b><br><i>网址:</i><u>www.chanjet.net</u></div>
<div class="wm" style="left:2197.5px;top:677px"><i>电话:</i><b>400-665-0028</b><br><i>网址:</i><u>www.chanjet.net</u></div>
<div class="wm" style="left:2468.5px;top:677px"><i>电话:</i><b>400-665-0028</b><br><i>网址:</i><u>www.chanjet.net</u></div>
<div class="wm" style="left:2739.5px;top:677px"><i>电话:</i><b>400-665-0028</b><br><i>网址:</i><u>www.chanjet.net</u></div>
<div class="wm" style="left:3010.5px;top:677px"><i>电话:</i><b>400-665-0028</b><br><i>网址:</i><u>www.chanjet.net</u></div>
<div class="wm" style="left:300.5px;top:787px"><i>电话:</i><b>400-665-0028</b><br><i>网址:</i><u>www.chanjet.net</u></div>
<div class="wm" style="left:571.5px;top:787px"><i>电话:</i><b>400-665-0028</b><br><i>网址:</i><u>www.chanjet.net</u></div>
<div class="wm" style="left:842.5px;top:787px"><i>电话:</i><b>400-665-0028</b><br><i>网址:</i><u>www.chanjet.net</u></div>
<div class="wm" style="left:1113.5px;top:787px"><i>电话:</i><b>400-665-0028</b><br><i>网址:</i><u>www.chanjet.net</u></div>
<div class="wm" style="left:1384.5px;top:787px"><i>电话:</i><b>400-665-0028</b><br><i>网址:</i><u>www.chanjet.net</u></div>
<div class="wm" style="left:1655.5px;top:787px"><i>电话:</i><b>400-665-0028</b><br><i>网址:</i><u>www.chanjet.net</u></div>
<div class="wm" style="left:1926.5px;top:787px"><i>电话:</i><b>400-665-0028</b><br><i>网址:</i><u>www.chanjet.net</u></div>
<div class="wm" style="left:2197.5px;top:787px"><i>电话:</i><b>400-665-0028</b><br><i>网址:</i><u>www.chanjet.net</u></div>
<div class="wm" style="left:2468.5px;top:787px"><i>电话:</i><b>400-665-0028</b><br><i>网址:</i><u>www.chanjet.net</u></div>
<div class="wm" style="left:2739.5px;top:787px"><i>电话:</i><b>400-665-0028</b><br><i>网址:</i><u>www.chanjet.net</u></div>
<div class="wm" style="left:3010.5px;top:787px"><i>电话:</i><b>400-665-0028</b><br><i>网址:</i><u>www.chanjet.net</u></div>
<div class="wm" style="left:300.5px;top:897px"><i>电话:</i><b>400-665-0028</b><br><i>网址:</i><u>www.chanjet.net</u></div>
<div class="wm" style="left:571.5px;top:897px"><i>电话:</i><b>400-665-0028</b><br><i>网址:</i><u>www.chanjet.net</u></div>
<div class="wm" style="left:842.5px;top:897px"><i>电话:</i><b>400-665-0028</b><br><i>网址:</i><u>www.chanjet.net</u></div>
<div class="wm" style="left:1113.5px;top:897px"><i>电话:</i><b>400-665-0028</b><br><i>网址:</i><u>www.chanjet.net</u></div>
<div class="wm" style="left:1384.5px;top:897px"><i>电话:</i><b>400-665-0028</b><br><i>网址:</i><u>www.chanjet.net</u></div>
<div class="wm" style="left:1655.5px;top:897px"><i>电话:</i><b>400-665-0028</b><br><i>网址:</i><u>www.chanjet.net</u></div>
<div class="wm" style="left:1926.5px;top:897px"><i>电话:</i><b>400-665-0028</b><br><i>网址:</i><u>www.chanjet.net</u></div>
<div class="wm" style="left:2197.5px;top:897px"><i>电话:</i><b>400-665-0028</b><br><i>网址:</i><u>www.chanjet.net</u></div>
<div class="wm" style="left:2468.5px;top:897px"><i>电话:</i><b>400-665-0028</b><br><i>网址:</i><u>www.chanjet.net</u></div>
<div class="wm" style="left:2739.5px;top:897px"><i>电话:</i><b>400-665-0028</b><br><i>网址:</i><u>www.chanjet.net</u></div>
<div class="wm" style="left:3010.5px;top:897px"><i>电话:</i><b>400-665-0028</b><br><i>网址:</i><u>www.chanjet.net</u></div>
<div class="wm" style="left:300.5px;top:1007px"><i>电话:</i><b>400-665-0028</b><br><i>网址:</i><u>www.chanjet.net</u></div>
<div class="wm" style="left:571.5px;top:1007px"><i>电话:</i><b>400-665-0028</b><br><i>网址:</i><u>www.chanjet.net</u></div>
<div class="wm" style="left:842.5px;top:1007px"><i>电话:</i><b>400-665-0028</b><br><i>网址:</i><u>www.chanjet.net</u></div>
<div class="wm" style="left:1113.5px;top:1007px"><i>电话:</i><b>400-665-0028</b><br><i>网址:</i><u>www.chanjet.net</u></div>
<div class="wm" style="left:1384.5px;top:1007px"><i>电话:</i><b>400-665-0028</b><br><i>网址:</i><u>www.chanjet.net</u></div>
<div class="wm" style="left:1655.5px;top:1007px"><i>电话:</i><b>400-665-0028</b><br><i>网址:</i><u>www.chanjet.net</u></div>
<div class="wm" style="left:1926.5px;top:1007px"><i>电话:</i><b>400-665-0028</b><br><i>网址:</i><u>www.chanjet.net</u></div>
<div class="wm" style="left:2197.5px;top:1007px"><i>电话:</i><b>400-665-0028</b><br><i>网址:</i><u>www.chanjet.net</u></div>
<div class="wm" style="left:2468.5px;top:1007px"><i>电话:</i><b>400-665-0028</b><br><i>网址:</i><u>www.chanjet.net</u></div>
<div class="wm" style="left:2739.5px;top:1007px"><i>电话:</i><b>400-665-0028</b><br><i>网址:</i><u>www.chanjet.net</u></div>
<div class="wm" style="left:3010.5px;top:1007px"><i>电话:</i><b>400-665-0028</b><br><i>网址:</i><u>www.chanjet.net</u></div>
<div class="wm" style="left:300.5px;top:1117px"><i>电话:</i><b>400-665-0028</b><br><i>网址:</i><u>www.chanjet.net</u></div>
<div class="wm" style="left:571.5px;top:1117px"><i>电话:</i><b>400-665-0028</b><br><i>网址:</i><u>www.chanjet.net</u></div>
<div class="wm" style="left:842.5px;top:1117px"><i>电话:</i><b>400-665-0028</b><br><i>网址:</i><u>www.chanjet.net</u></div>
<div class="wm" style="left:1113.5px;top:1117px"><i>电话:</i><b>400-665-0028</b><br><i>网址:</i><u>www.chanjet.net</u></div>
<div class="wm" style="left:1384.5px;top:1117px"><i>电话:</i><b>400-665-0028</b><br><i>网址:</i><u>www.chanjet.net</u></div>
<div class="wm" style="left:1655.5px;top:1117px"><i>电话:</i><b>400-665-0028</b><br><i>网址:</i><u>www.chanjet.net</u></div>
<div class="wm" style="left:1926.5px;top:1117px"><i>电话:</i><b>400-665-0028</b><br><i>网址:</i><u>www.chanjet.net</u></div>
<div class="wm" style="left:2197.5px;top:1117px"><i>电话:</i><b>400-665-0028</b><br><i>网址:</i><u>www.chanjet.net</u></div>
<div class="wm" style="left:2468.5px;top:1117px"><i>电话:</i><b>400-665-0028</b><br><i>网址:</i><u>www.chanjet.net</u></div>
<div class="wm" style="left:2739.5px;top:1117px"><i>电话:</i><b>400-665-0028</b><br><i>网址:</i><u>www.chanjet.net</u></div>
<div class="wm" style="left:3010.5px;top:1117px"><i>电话:</i><b>400-665-0028</b><br><i>网址:</i><u>www.chanjet.net</u></div>
<div class="wm" style="left:300.5px;top:1227px"><i>电话:</i><b>400-665-0028</b><br><i>网址:</i><u>www.chanjet.net</u></div>
<div class="wm" style="left:571.5px;top:1227px"><i>电话:</i><b>400-665-0028</b><br><i>网址:</i><u>www.chanjet.net</u></div>
<div class="wm" style="left:842.5px;top:1227px"><i>电话:</i><b>400-665-0028</b><br><i>网址:</i><u>www.chanjet.net</u></div>
<div class="wm" style="left:1113.5px;top:1227px"><i>电话:</i><b>400-665-0028</b><br><i>网址:</i><u>www.chanjet.net</u></div>
<div class="wm" style="left:1384.5px;top:1227px"><i>电话:</i><b>400-665-0028</b><br><i>网址:</i><u>www.chanjet.net</u></div>
<div class="wm" style="left:1655.5px;top:1227px"><i>电话:</i><b>400-665-0028</b><br><i>网址:</i><u>www.chanjet.net</u></div>
<div class="wm" style="left:1926.5px;top:1227px"><i>电话:</i><b>400-665-0028</b><br><i>网址:</i><u>www.chanjet.net</u></div>
<div class="wm" style="left:2197.5px;top:1227px"><i>电话:</i><b>400-665-0028</b><br><i>网址:</i><u>www.chanjet.net</u></div>
<div class="wm" style="left:2468.5px;top:1227px"><i>电话:</i><b>400-665-0028</b><br><i>网址:</i><u>www.chanjet.net</u></div>
<div class="wm" style="left:2739.5px;top:1227px"><i>电话:</i><b>400-665-0028</b><br><i>网址:</i><u>www.chanjet.net</u></div>
<div class="wm" style="left:3010.5px;top:1227px"><i>电话:</i><b>400-665-0028</b><br><i>网址:</i><u>www.chanjet.net</u></div>
<div class="wm" style="left:300.5px;top:1337px"><i>电话:</i><b>400-665-0028</b><br><i>网址:</i><u>www.chanjet.net</u></div>
<div class="wm" style="left:571.5px;top:1337px"><i>电话:</i><b>400-665-0028</b><br><i>网址:</i><u>www.chanjet.net</u></div>
<div class="wm" style="left:842.5px;top:1337px"><i>电话:</i><b>400-665-0028</b><br><i>网址:</i><u>www.chanjet.net</u></div>
<div class="wm" style="left:1113.5px;top:1337px"><i>电话:</i><b>400-665-0028</b><br><i>网址:</i><u>www.chanjet.net</u></div>
<div class="wm" style="left:1384.5px;top:1337px"><i>电话:</i><b>400-665-0028</b><br><i>网址:</i><u>www.chanjet.net</u></div>
<div class="wm" style="left:1655.5px;top:1337px"><i>电话:</i><b>400-665-0028</b><br><i>网址:</i><u>www.chanjet.net</u></div>
<div class="wm" style="left:1926.5px;top:1337px"><i>电话:</i><b>400-665-0028</b><br><i>网址:</i><u>www.chanjet.net</u></div>
<div class="wm" style="left:2197.5px;top:1337px"><i>电话:</i><b>400-665-0028</b><br><i>网址:</i><u>www.chanjet.net</u></div>
<div class="wm" style="left:2468.5px;top:1337px"><i>电话:</i><b>400-665-0028</b><br><i>网址:</i><u>www.chanjet.net</u></div>
<div class="wm" style="left:2739.5px;top:1337px"><i>电话:</i><b>400-665-0028</b><br><i>网址:</i><u>www.chanjet.net</u></div>
<div class="wm" style="left:3010.5px;top:1337px"><i>电话:</i><b>400-665-0028</b><br><i>网址:</i><u>www.chanjet.net</u></div>
</div></body></html>
